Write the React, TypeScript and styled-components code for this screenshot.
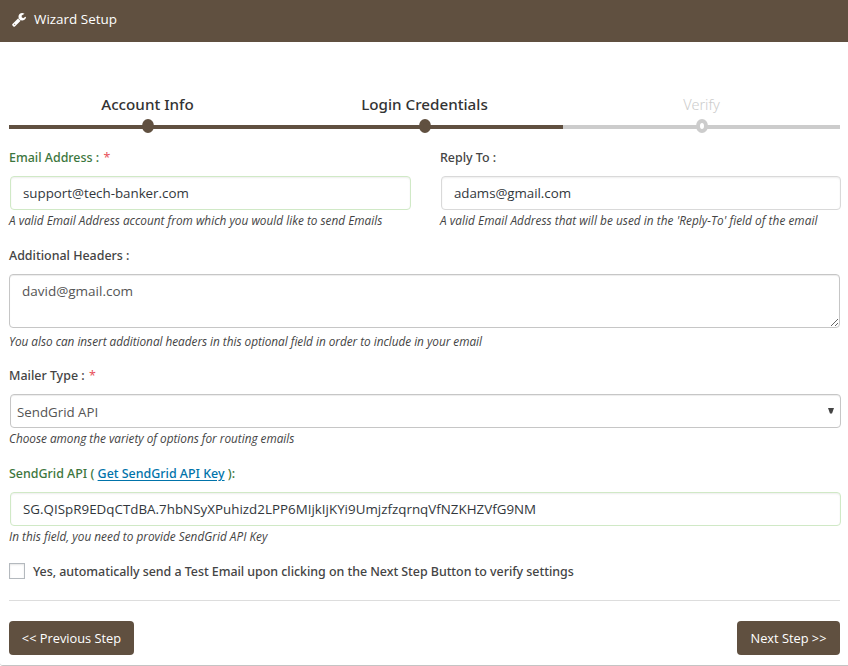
import React from "react";
import styled, { createGlobalStyle } from "styled-components";

const BROWN = "#605040";
const UI = '"Open Sans", "Noto Sans", sans-serif';
const HEADING = '"Noto Sans", "Open Sans", sans-serif';

const GlobalStyle = createGlobalStyle`
  * { box-sizing: border-box; }
  body { margin: 0; background: #fff; font-family: ${UI}; color: #444; }
`;

const Portlet = styled.main`
  display: flex;
  flex-direction: column;
  height: 666px;
  overflow: hidden;
  border-bottom: 1px solid #c4c4c4;
  border-radius: 0 0 0 3px;
`;

const TitleBar = styled.header`
  flex: none;
  display: flex;
  align-items: center;
  gap: 8px;
  height: 42px;
  padding: 0 0 3px 12px;
  background: ${BROWN};
  color: #fff;
`;

const Title = styled.h1`
  margin: 0 0 2px;
  font: 400 13.45px/20px ${UI};
`;

const Body = styled.form`
  display: flex;
  flex-direction: column;
  padding: 51px 7px 0 9px;
`;

const Steps = styled.ol`
  display: grid;
  grid-template-columns: repeat(3, 1fr);
  width: 831px;
  height: 55px;
  margin: 0;
  padding: 0;
  list-style: none;
`;

const Step = styled.li<{ $active?: boolean }>`
  display: grid;
  grid-template-rows: 26px 14px;
  justify-items: center;
  font: ${(p) => (p.$active ? 500 : 300)} ${(p) => (p.$active ? 15.2 : 14.5)}px/22px ${HEADING};
  color: ${(p) => (p.$active ? "#333" : "#ccc")};
  background: linear-gradient(${(p) => (p.$active ? BROWN : "#ccc")}, ${(p) => (p.$active ? BROWN : "#ccc")}) 0 32px / 100% 4px no-repeat;
`;

const StepDot = styled.span<{ $active?: boolean }>`
  width: 12px;
  height: 14px;
  border: 4px solid ${(p) => (p.$active ? BROWN : "#ccc")};
  border-radius: 50%;
  background: ${(p) => (p.$active ? BROWN : "#fff")};
`;

const Columns = styled.div`
  display: grid;
  grid-template-columns: 402px 401px;
  column-gap: 29px;
`;

const Field = styled.div<{ $height: number }>`
  display: flex;
  flex-direction: column;
  height: ${(p) => p.$height}px;
`;

const Label = styled.label<{ $valid?: boolean }>`
  height: 28px;
  font: 500 12.45px/19px ${HEADING};
  color: ${(p) => (p.$valid ? "#3c763d" : "#444")};
  white-space: pre;
`;

const Required = styled.span`
  margin-left: 1px;
  font-weight: 400;
  color: #e7505a;
`;

const Link = styled.a`
  color: #0073aa;
  text-decoration: underline;
  text-underline-offset: 2px;
`;

const Input = styled.input<{ $valid?: boolean; $spacing?: number }>`
  height: 34px;
  margin-left: 1px;
  padding: 0 12px 1px;
  border: 1px solid ${(p) => (p.$valid ? "#d0e9c6" : "#d9d9d9")};
  border-radius: 4px;
  outline: none;
  background: #fff;
  box-shadow: inset 0 1px 2px rgba(0, 0, 0, 0.07);
  color: #32373c;
  font: 400 13.35px/20px ${UI};
  letter-spacing: ${(p) => p.$spacing ?? 0}px;
`;

const TextArea = styled.textarea`
  width: 831px;
  height: 54px;
  padding: 6px 12px;
  border: 1px solid #c6c6c6;
  border-radius: 4px;
  outline: none;
  resize: vertical;
  overflow: hidden;
  background: #fff;
  box-shadow: inset 0 1px 1px rgba(0, 0, 0, 0.075);
  color: #555;
  font: 400 13.5px/20px ${UI};
`;

const Select = styled.button`
  display: flex;
  align-items: center;
  justify-content: space-between;
  height: 34px;
  margin-left: 1px;
  padding: 2px 6px 0;
  border: 1px solid #c6c6c6;
  border-radius: 4px;
  background: #fff;
  box-shadow: inset 0 1px 1px rgba(0, 0, 0, 0.075);
  color: #555;
  font: 400 13.3px/20px ${UI};
`;

const Arrow = styled.svg`
  margin-bottom: 3px;
`;

const Help = styled.i<{ $top?: number; $spacing?: number }>`
  margin-top: ${(p) => p.$top ?? 1}px;
  font: italic 400 11.8px/18px ${UI};
  letter-spacing: ${(p) => p.$spacing ?? 0.01}px;
  white-space: nowrap;
  color: #444;
`;

const CheckRow = styled.label`
  display: flex;
  align-items: center;
  gap: 8px;
  height: 18px;
  font: 500 12.45px/18px ${HEADING};
  white-space: nowrap;
`;

const CheckText = styled.span`
  padding-top: 1px;
  letter-spacing: -0.04px;
`;

const CheckBox = styled.input`
  appearance: none;
  width: 16px;
  height: 16px;
  margin: 0;
  border: 1px solid #b4b9be;
  background: #fff;
  box-shadow: inset 0 1px 2px rgba(0, 0, 0, 0.1);
`;

const Actions = styled.footer`
  display: flex;
  justify-content: space-between;
  width: 831px;
  margin-top: 20px;
  padding-top: 20px;
  border-top: 1px solid #ddd;
`;

const Button = styled.button<{ $width: number }>`
  width: ${(p) => p.$width}px;
  height: 34px;
  padding: 0 0 1px;
  border: 0;
  border-radius: 4px;
  background: ${BROWN};
  color: #fff;
  font: 400 12.8px/20px ${UI};
  white-space: nowrap;
`;

const WrenchIcon = () => (
  <svg width="14" height="14" viewBox="0 0 1664 1664" fill="#fff" aria-hidden="true">
    <path d="M384 1344q0-26-19-45t-45-19-45 19-19 45 19 45 45 19 45-19 19-45zm644-420l-682 682q-37 37-90 37-52 0-91-37l-106-108q-38-36-38-90 0-53 38-91l681-681q39 98 114.500 173.500t173.500 114.500zm634-435q0 39-23 106-47 134-164.500 217.500t-258.500 83.500q-185 0-316.500-131.500t-131.500-316.500 131.500-316.500 316.500-131.500q58 0 121.500 16.500t107.500 46.500q16 11 16 28t-16 28l-293 169v224l193 107q5-3 79-48.500t135.500-81 70.500-35.500q15 0 23.500 10t8.500 25z" />
  </svg>
);

export default function App() {
  return (
    <>
      <GlobalStyle />
      <Portlet>
        <TitleBar>
          <WrenchIcon />
          <Title>Wizard Setup</Title>
        </TitleBar>
        <Body>
          <Steps>
            <Step $active>Account Info<StepDot $active /></Step>
            <Step $active>Login Credentials<StepDot $active /></Step>
            <Step>Verify<StepDot /></Step>
          </Steps>
          <Columns>
            <Field $height={98}>
              <Label $valid>Email Address : <Required>*</Required></Label>
              <Input $valid $spacing={-0.02} defaultValue="support@tech-banker.com" />
              <Help>A valid Email Address account from which you would like to send Emails</Help>
            </Field>
            <Field $height={98}>
              <Label>Reply To :</Label>
              <Input $spacing={-0.05} defaultValue="adams@gmail.com" />
              <Help $spacing={0.05}>A valid Email Address that will be used in the 'Reply-To' field of the email</Help>
            </Field>
          </Columns>
          <Field $height={120}>
            <Label>Additional Headers :</Label>
            <TextArea defaultValue="david@gmail.com" />
            <Help $top={4} $spacing={-0.03}>You also can insert additional headers in this optional field in order to include in your email</Help>
          </Field>
          <Field $height={98}>
            <Label>Mailer Type : <Required>*</Required></Label>
            <Select type="button">
              SendGrid API
              <Arrow width="6" height="6" viewBox="0 0 6 6" aria-hidden="true">
                <path d="M0 0h6L4 5.500H2z" fill="#444" />
              </Arrow>
            </Select>
            <Help $spacing={-0.02}>Choose among the variety of options for routing emails</Help>
          </Field>
          <Field $height={98}>
            <Label $valid>SendGrid API ( <Link href="#">Get SendGrid API Key</Link> ):</Label>
            <Input $valid $spacing={0.02} defaultValue="SG.QISpR9EDqCTdBA.7hbNSyXPuhizd2LPP6MIjkIjKYi9UmjzfzqrnqVfNZKHZVfG9NM" />
            <Help>In this field, you need to provide SendGrid API Key</Help>
          </Field>
          <CheckRow>
            <CheckBox type="checkbox" />
            <CheckText>Yes, automatically send a Test Email upon clicking on the Next Step Button to verify settings</CheckText>
          </CheckRow>
          <Actions>
            <Button type="button" $width={125}>&lt;&lt; Previous Step</Button>
            <Button type="button" $width={103}>Next Step &gt;&gt;</Button>
          </Actions>
        </Body>
      </Portlet>
    </>
  );
}
